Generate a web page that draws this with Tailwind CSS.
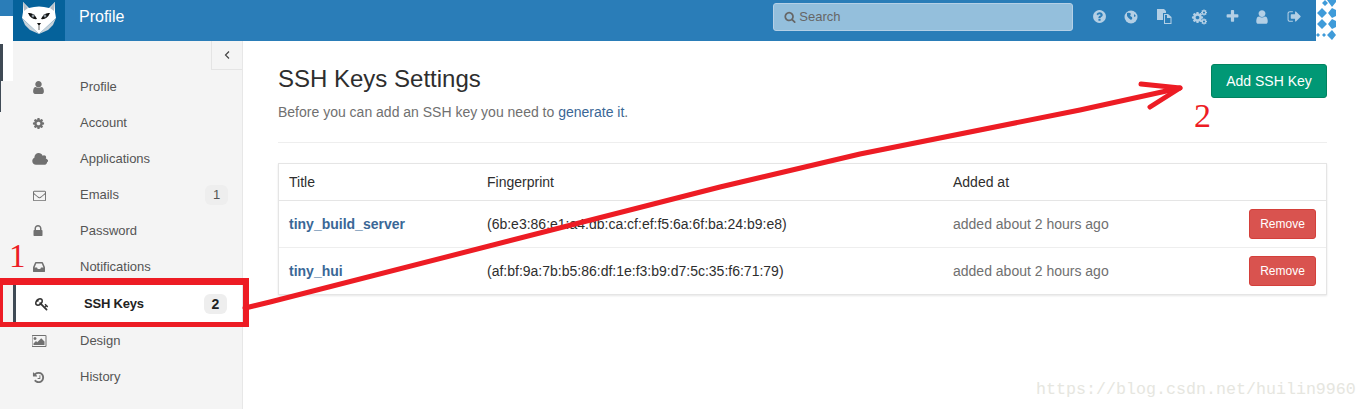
<!DOCTYPE html>
<html lang="en">
<head>
    <meta charset="UTF-8">
    <meta name="viewport" content="width=device-width, initial-scale=1.0">
    <title>SSH Keys Settings</title>
    <script src="https://cdn.jsdelivr.net/npm/@tailwindcss/browser@4"></script>
</head>
<body class="bg-white font-['Liberation_Sans',Arial,sans-serif] text-[14px] text-[#2e2e2e]">
    <!-- shared icons -->
    <svg class="hidden">
        <symbol id="i-user" viewBox="0 0 1792 1792"><path d="M1536 1399q0 109-62.5 187t-150.5 78h-854q-88 0-150.5-78t-62.5-187q0-85 8.5-160.5t31.5-152 58.5-131 94-89 134.5-34.5q131 128 313 128t313-128q76 0 134.5 34.5t94 89 58.5 131 31.5 152 8.5 160.5zm-256-887q0 159-112.5 271.5t-271.5 112.5-271.5-112.5-112.5-271.5 112.5-271.5 271.5-112.5 271.5 112.5 112.5 271.5z"/></symbol>
        <symbol id="i-cog" viewBox="0 0 1792 1792"><path d="M1152 896q0-106-75-181t-181-75-181 75-75 181 75 181 181 75 181-75 75-181zm512-109v222q0 12-8 23t-20 13l-185 28q-19 54-39 91 35 50 107 138 10 12 10 25t-9 23q-27 37-99 108t-94 71q-12 0-26-9l-138-108q-44 23-91 38-16 136-29 186-7 28-36 28h-222q-14 0-24.5-8.5t-11.5-21.5l-28-184q-49-16-90-37l-141 107q-10 9-25 9-14 0-25-11-126-114-165-168-7-10-7-23 0-12 8-23 15-21 51-66.5t54-70.5q-27-50-41-99l-183-27q-13-2-21-12.5t-8-23.5v-222q0-12 8-23t19-13l186-28q14-46 39-92-40-57-107-138-10-12-10-24 0-10 9-23 26-36 98.5-107.5t94.5-71.5q13 0 26 10l138 107q44-23 91-38 16-136 29-186 7-28 36-28h222q14 0 24.5 8.5t11.5 21.5l28 184q49 16 90 37l142-107q9-9 24-9 13 0 25 10 129 119 165 170 7 8 7 22 0 12-8 23-15 21-51 66.5t-54 70.5q26 50 41 98l183 28q13 2 21 12.5t8 23.5z"/></symbol>
        <symbol id="i-cloud" viewBox="0 0 1920 1792"><path d="M1728 1152q0 159-112.5 271.5t-271.5 112.5h-960q-185 0-316.5-131.5t-131.5-316.5q0-132 71-241.5t187-163.5q-2-28-2-43 0-212 150-362t362-150q158 0 286.5 88t187.5 230q70-62 166-62 106 0 181 75t75 181q0 75-41 138 129 30 213 134.5t84 239.5z" transform="translate(96 0)"/></symbol>
        <symbol id="i-mail" viewBox="0 0 1792 1792"><path d="M1664 1504v-768q-32 36-69 66-268 206-426 338-51 43-83 67t-86.5 48.5-102.5 24.5h-2q-48 0-102.5-24.5t-86.5-48.5-83-67q-158-132-426-338-37-30-69-66v768q0 13 9.5 22.5t22.5 9.5h1472q13 0 22.5-9.5t9.5-22.5zm0-1051v-24.5l-.5-13-3-12.5-5.5-9-9-7.5-14-2.5h-1472q-13 0-22.5 9.5t-9.5 22.5q0 168 147 284 193 152 401 317 6 5 35 29.5t46 37.5 44.5 31.5 50.5 27.5 43 9h2q20 0 43-9t50.5-27.5 44.5-31.5 46-37.5 35-29.5q208-165 401-317 54-43 100.5-115.5t46.5-131.5zm128-37v1088q0 66-47 113t-113 47h-1472q-66 0-113-47t-47-113v-1088q0-66 47-113t113-47h1472q66 0 113 47t47 113z"/></symbol>
        <symbol id="i-lock" viewBox="0 0 1792 1792"><path d="M640 768h512v-192q0-106-75-181t-181-75-181 75-75 181v192zm832 96v576q0 40-28 68t-68 28h-960q-40 0-68-28t-28-68v-576q0-40 28-68t68-28h32v-192q0-184 132-316t316-132 316 132 132 316v192h32q40 0 68 28t28 68z"/></symbol>
        <symbol id="i-inbox" viewBox="0 0 1792 1792"><path d="M1151 960h316q-1-3-2.5-8.5t-2.5-7.5l-212-496h-708l-212 496q-1 3-2.5 8.5t-2.5 7.5h316l95 192h320zm513 30v482q0 26-19 45t-45 19h-1408q-26 0-45-19t-19-45v-482q0-62 25-123l238-552q10-25 36.5-42t52.5-17h832q26 0 52.5 17t36.5 42l238 552q25 61 25 123z"/></symbol>
        <symbol id="i-key" viewBox="0 0 1792 1792"><path d="M832 512q0-80-56-136t-136-56-136 56-56 136q0 42 19 83-41-19-83-19-80 0-136 56t-56 136 56 136 136 56 136-56 56-136q0-42-19-83 41 19 83 19 80 0 136-56t56-136zm851 704q0 17-49 66t-66 49q-9 0-28.5-16t-36.5-33-38.5-40-24.5-26l-96 96 220 220q28 28 28 68 0 42-39 81t-81 39q-40 0-68-28l-671-671q-176 131-365 131-163 0-265.5-102.5t-102.5-265.5q0-160 95-313t248-248 313-95q163 0 265.5 102.5t102.5 265.5q0 189-131 365l355 355 96-96q-3-3-26-24.5t-40-38.5-33-36.5-16-28.5q0-17 49-66t66-49q13 0 23 10 6 6 46 44.5t82 79.5 86.5 86 73 78 28.5 41z"/></symbol>
        <symbol id="i-image" viewBox="0 0 1920 1792"><path d="M576 576q0 80-56 136t-136 56-136-56-56-136 56-136 136-56 136 56 56 136zm1024 384v448h-1408v-192l320-320 160 160 512-512zm96-704h-1600q-13 0-22.5 9.5t-9.5 22.5v1216q0 13 9.5 22.5t22.5 9.5h1600q13 0 22.5-9.5t9.5-22.5v-1216q0-13-9.5-22.5t-22.5-9.5zm160 32v1216q0 66-47 113t-113 47h-1600q-66 0-113-47t-47-113v-1216q0-66 47-113t113-47h1600q66 0 113 47t47 113z"/></symbol>
        <symbol id="i-history" viewBox="0 0 1792 1792"><path d="M1664 896q0 156-61 298t-164 245-245 164-298 61q-172 0-327-72.5t-264-204.5q-7-10-6.5-22.5t8.5-20.5l137-138q10-9 25-9 16 2 23 12 73 95 179 147t225 52q104 0 198.5-40.5t163.5-109.5 109.5-163.5 40.5-198.5-40.5-198.5-109.5-163.5-163.5-109.5-198.5-40.5q-98 0-188 35.5t-160 101.5l137 138q31 30 14 69-17 40-59 40h-448q-26 0-45-19t-19-45v-448q0-42 40-59 39-17 69 14l130 129q107-101 244.5-156.5t284.5-55.5q156 0 298 61t245 164 164 245 61 298zm-512-288v448q0 14-9 23t-23 9h-320q-14 0-23-9t-9-23v-64q0-14 9-23t23-9h224v-352q0-14 9-23t23-9h64q14 0 23 9t9 23z"/></symbol>
        <symbol id="i-question" viewBox="0 0 1792 1792"><path d="M1024 1376v-192q0-14-9-23t-23-9h-192q-14 0-23 9t-9 23v192q0 14 9 23t23 9h192q14 0 23-9t9-23zm256-672q0-88-55.5-163t-138.5-116-170-41q-243 0-371 213-15 24 8 42l132 100q7 6 19 6 16 0 25-12 53-68 86-92 34-24 86-24 48 0 85.5 26t37.5 59q0 38-20 61t-68 45q-63 28-115.5 86.5t-52.5 125.5v36q0 14 9 23t23 9h192q14 0 23-9t9-23q0-19 21.5-49.5t54.5-49.5q32-18 49-28.5t46-35 44.5-48 28-60.5 12.5-81zm384 192q0 209-103 385.5t-279.5 279.5-385.5 103-385.5-103-279.5-279.5-103-385.5 103-385.5 279.5-279.5 385.5-103 385.5 103 279.5 279.5 103 385.5z"/></symbol>
        <symbol id="i-plus" viewBox="0 0 1792 1792"><path d="M1600 736v192q0 40-28 68t-68 28h-416v416q0 40-28 68t-68 28h-192q-40 0-68-28t-28-68v-416h-416q-40 0-68-28t-28-68v-192q0-40 28-68t68-28h416v-416q0-40 28-68t68-28h192q40 0 68 28t28 68v416h416q40 0 68 28t28 68z"/></symbol>
        <symbol id="i-signout" viewBox="0 0 1792 1792"><path d="M704 1440q0 4 1 20t.5 26.5-3 23.5-10 19.5-20.5 6.5h-320q-119 0-203.5-84.5t-84.5-203.5v-704q0-119 84.5-203.5t203.5-84.5h320q13 0 22.5 9.5t9.5 22.5q0 4 1 20t.5 26.5-3 23.5-10 19.5-20.5 6.5h-320q-66 0-113 47t-47 113v704q0 66 47 113t113 47h312l11.5 1 11.5 3 8 5.5 7 9 2 13.5zm928-544q0 26-19 45l-544 544q-19 19-45 19t-45-19-19-45v-288h-448q-26 0-45-19t-19-45v-384q0-26 19-45t45-19h448v-288q0-26 19-45t45-19 45 19l544 544q19 19 19 45z"/></symbol>
        <symbol id="i-search" viewBox="0 0 1792 1792"><path d="M1216 832q0-185-131.5-316.5t-316.5-131.5-316.5 131.5-131.5 316.5 131.5 316.5 316.5 131.5 316.5-131.5 131.5-316.5zm512 832q0 52-38 90t-90 38q-54 0-90-38l-343-342q-179 124-399 124-143 0-273.5-55.5t-225-150-150-225-55.5-273.5 55.5-273.5 150-225 225-150 273.5-55.5 273.5 55.5 225 150 150 225 55.5 273.5q0 220-124 399l343 343q37 37 37 90z"/></symbol>
    </svg>

    <div class="relative w-[1367px] h-[409px] overflow-hidden">
        <!-- top bar -->
        <header class="flex items-center w-[1316px] h-[41px] bg-[#2a7db8] text-white">
            <a class="block ml-[13px] w-[52px] h-full bg-[#05629b]">
                <svg class="w-[52px] h-[41px]" viewBox="0 0 52 41">
                    <path d="M10 2 L16 8 Q26 5 36 8 L42 2 L42 12 L43 18 L26 34 L9 18 L10 12Z" fill="#fff"/>
                    <path d="M10 2 L15 8 L11 11Z M42 2 L37 8 L41 11Z" fill="#b4bec6"/>
                    <path d="M9 18 L26 34 L17 30 L12 25Z M43 18 L26 34 L35 30 L40 25Z" fill="#c9d3da"/>
                    <path d="M15 13 Q21 12 24 19 Q18 20 15 13Z" fill="#111"/>
                    <path d="M37 13 Q31 12 28 19 Q34 20 37 13Z" fill="#111"/>
                    <circle cx="20" cy="16" r="1.4" fill="#8d979f"/>
                    <circle cx="32" cy="16" r="1.4" fill="#8d979f"/>
                    <path d="M24 23 H28 L26 26Z" fill="#111"/>
                    <path d="M26 26 V30" stroke="#666" stroke-width="1"/>
                </svg>
            </a>
            <span class="ml-[14px] text-[16px] -mt-[8px]">Profile</span>
            <div class="flex items-center ml-[649px] -mt-[7px] w-[300px] h-[28px] pl-[10px] gap-[3px] rounded-[3px] bg-[#94bfdc] border border-[#b5d0e6] text-[13px] text-[#666]">
                <svg class="w-[12px] h-[12px] fill-current"><use href="#i-search"/></svg>
                <span>Search</span>
            </div>
            <div class="flex items-center ml-[19px] -mt-[8px] text-[#b3cfe5]">
                <svg class="w-[15px] h-[15px] fill-current"><use href="#i-question"/></svg>
                <svg class="w-[14px] h-[14px] ml-[17px]" viewBox="0 0 14 14"><circle cx="7" cy="7" r="6.5" fill="#b3cfe5"/><path d="M3 3 Q6 2 7 4 Q5 6 8 7 Q9 9 7 10 Q4 8 3 6Z M10 4 L12 6 L10 7Z" fill="#2a7db8"/></svg>
                <svg class="w-[15px] h-[15px] ml-[19px]" viewBox="0 0 15 15"><path d="M0 0H7L9 2V4H6V11H0Z" fill="#b3cfe5"/><path d="M7 5H11L14.500 8V15H7ZM8 6V14H13.500V9H10V6Z" fill="#b3cfe5"/></svg>
                <svg class="w-[16px] h-[16px] ml-[19px]" viewBox="0 0 16 16" fill="#b3cfe5"><use href="#i-cog" x="0" y="2" width="13" height="13"/><use href="#i-cog" x="9.500" y="0" width="7" height="7"/><use href="#i-cog" x="9.500" y="9" width="7" height="7"/></svg>
                <svg class="w-[15px] h-[15px] ml-[18px] fill-current"><use href="#i-plus"/></svg>
                <svg class="w-[16px] h-[16px] ml-[14px] fill-current"><use href="#i-user"/></svg>
                <svg class="w-[15px] h-[15px] ml-[17px] fill-current"><use href="#i-signout"/></svg>
            </div>
        </header>

        <div class="flex h-[368px]">
            <!-- sidebar -->
            <aside class="relative w-[243px] h-full pt-[28px] bg-[#f4f4f4] border-r border-[#e7e7e7] text-[13px] text-[#555]">
                <button class="absolute top-0 right-0 flex items-center justify-center w-[31px] h-[29px] bg-[#f4f4f4] border-l border-b border-[#e4e4e4] text-[#444]">
                    <svg class="w-[6px] h-[8px]" viewBox="0 0 6 8" fill="none" stroke="currentColor" stroke-width="1.2"><path d="M5 0.5 L1.5 4 L5 7.5"/></svg>
                </button>
                <ul>
                    <li class="flex items-center h-[36px] pl-[31px]">
                        <svg class="w-[15px] h-[15px] fill-[#707070]"><use href="#i-user"/></svg>
                        <span class="ml-[34px]">Profile</span>
                    </li>
                    <li class="flex items-center h-[36px] pl-[32px]">
                        <svg class="w-[13px] h-[13px] fill-[#707070]"><use href="#i-cog"/></svg>
                        <span class="ml-[35px]">Account</span>
                    </li>
                    <li class="flex items-center h-[36px] pl-[32px]">
                        <svg class="w-[16px] h-[15px] fill-[#707070]"><use href="#i-cloud"/></svg>
                        <span class="ml-[32px]">Applications</span>
                    </li>
                    <li class="flex items-center h-[36px] pl-[33px] pr-[14px]">
                        <svg class="w-[13px] h-[13px] fill-[#707070]"><use href="#i-mail"/></svg>
                        <span class="ml-[34px]">Emails</span>
                        <span class="ml-auto flex items-center justify-center w-[23px] h-[20px] rounded-md bg-[#eee]">1</span>
                    </li>
                    <li class="flex items-center h-[36px] pl-[31px]">
                        <svg class="w-[14px] h-[14px] fill-[#707070]"><use href="#i-lock"/></svg>
                        <span class="ml-[35px]">Password</span>
                    </li>
                    <li class="flex items-center h-[36px] pl-[32px]">
                        <svg class="w-[14px] h-[14px] fill-[#707070]"><use href="#i-inbox"/></svg>
                        <span class="ml-[34px]">Notifications</span>
                    </li>
                    <li class="flex items-center h-[38px] ml-[13px] pl-[19px] pr-[15px] bg-white border-l-[3px] border-[#3f4a55] font-bold text-[#222]">
                        <svg class="w-[14px] h-[14px] fill-[#333]"><use href="#i-key"/></svg>
                        <span class="ml-[35px] tracking-[-0.2px]">SSH Keys</span>
                        <span class="ml-auto flex items-center justify-center w-[23px] h-[20px] rounded-md bg-[#eee] text-[14px]">2</span>
                    </li>
                    <li class="flex items-center h-[36px] pl-[32px]">
                        <svg class="w-[15px] h-[14px] fill-[#707070]"><use href="#i-image"/></svg>
                        <span class="ml-[33px]">Design</span>
                    </li>
                    <li class="flex items-center h-[36px] pl-[32px]">
                        <svg class="w-[13px] h-[13px] fill-[#707070]"><use href="#i-history"/></svg>
                        <span class="ml-[35px]">History</span>
                    </li>
                </ul>
            </aside>

            <!-- content -->
            <main class="flex-1 pl-[35px] pr-[40px]">
                <div class="flex justify-between pt-[23px] h-[102px] border-b border-[#eee]">
                    <div>
                        <h1 class="text-[24px] leading-[30px]">SSH Keys Settings</h1>
                        <p class="mt-[8px] text-[#707070]">Before you can add an SSH key you need to <a class="text-[#3a6796]">generate it</a>.</p>
                    </div>
                    <button class="w-[116px] h-[34px] rounded-[3px] bg-[#019875] border border-[#01835f] text-white">Add SSH Key</button>
                </div>
                <div class="mt-[20px] border border-[#e5e5e5] shadow-[0_1px_2px_rgba(0,0,0,0.1)]">
                    <div class="flex items-center h-[37px] pl-[10px] border-b border-[#e5e5e5]">
                        <span class="w-[198px]">Title</span>
                        <span class="w-[466px]">Fingerprint</span>
                        <span>Added at</span>
                    </div>
                    <div class="flex items-center h-[47px] pl-[10px] pr-[10px] border-b border-[#eee]">
                        <a class="w-[198px] font-bold text-[#3a6796]">tiny_build_server</a>
                        <span class="w-[466px]">(6b:e3:86:e1:a4:db:ca:cf:ef:f5:6a:6f:ba:24:b9:e8)</span>
                        <span class="text-[#707070]">added about 2 hours ago</span>
                        <button class="ml-auto w-[67px] h-[30px] rounded-[3px] bg-[#d9534f] border border-[#d43f3a] text-white text-[12px]">Remove</button>
                    </div>
                    <div class="flex items-center h-[46px] pl-[10px] pr-[10px]">
                        <a class="w-[198px] font-bold text-[#3a6796]">tiny_hui</a>
                        <span class="w-[466px]">(af:bf:9a:7b:b5:86:df:1e:f3:b9:d7:5c:35:f6:71:79)</span>
                        <span class="text-[#707070]">added about 2 hours ago</span>
                        <button class="ml-auto w-[67px] h-[30px] rounded-[3px] bg-[#d9534f] border border-[#d43f3a] text-white text-[12px]">Remove</button>
                    </div>
                </div>
            </main>
        </div>

        <!-- bits of another window showing at the left edge -->
        <div class="absolute left-0 top-[16px] w-[13px] h-[65px] bg-white"></div>
        <div class="absolute left-0 top-[44px] w-[3px] h-[37px] bg-[#3f4a55]"></div>
        <div class="absolute left-0 top-[81px] w-[1px] h-[31px] bg-[#3f4a55]"></div>

        <!-- diamond avatar strip -->
        <svg class="absolute left-[1316px] top-0 w-[20px] h-[41px]" viewBox="0 0 20 41" fill="#3f9bd9">
            <path d="M6 3 L9 0 L12 3 L9 6Z M1 13 L6 8 L11 13 L6 18Z M1 24 L6 19 L11 24 L6 29Z M0 35 L2 33 L4 35 L2 37Z M6 35 L8 33 L10 35 L8 37Z M11 35 L16 30 L20 35 L16 40Z M11 0 H20 V2 L16 7Z M12 13 L16 8 L20 10 V16 L16 18Z M12 24 L16 19 L20 21 V27 L16 29Z"/>
        </svg>

        <!-- red annotations drawn on the screenshot -->
        <div class="absolute left-0 top-[278px] w-[249px] h-[49px] border-solid border-t-[7px] border-r-[6px] border-b-[5px] border-l-[3px] border-[#ed1c24]"></div>
        <svg class="absolute inset-0 w-[1367px] h-[409px]" fill="none" stroke="#ed1c24" stroke-linecap="round" stroke-linejoin="round">
            <path d="M245 308 L270 302 L720 187 L860 154 L1080 110 L1180 88" stroke-width="5"/>
            <path d="M1141 84 L1180 88 L1150 107" stroke-width="5"/>
        </svg>
        <span class="absolute left-[9px] top-[237px] font-['Liberation_Serif',serif] text-[33px] leading-[38px] text-[#ed1c24]">1</span>
        <span class="absolute left-[1194px] top-[97px] font-['Liberation_Serif',serif] text-[34px] leading-[38px] text-[#ed1c24]">2</span>

        <!-- watermark -->
        <span class="absolute left-[1036px] top-[379px] font-['Liberation_Mono',monospace] text-[16.67px] leading-[22px] text-[#e6e6e0]">https://blog.csdn.net/huilin9960</span>
    </div>
</body>
</html>
